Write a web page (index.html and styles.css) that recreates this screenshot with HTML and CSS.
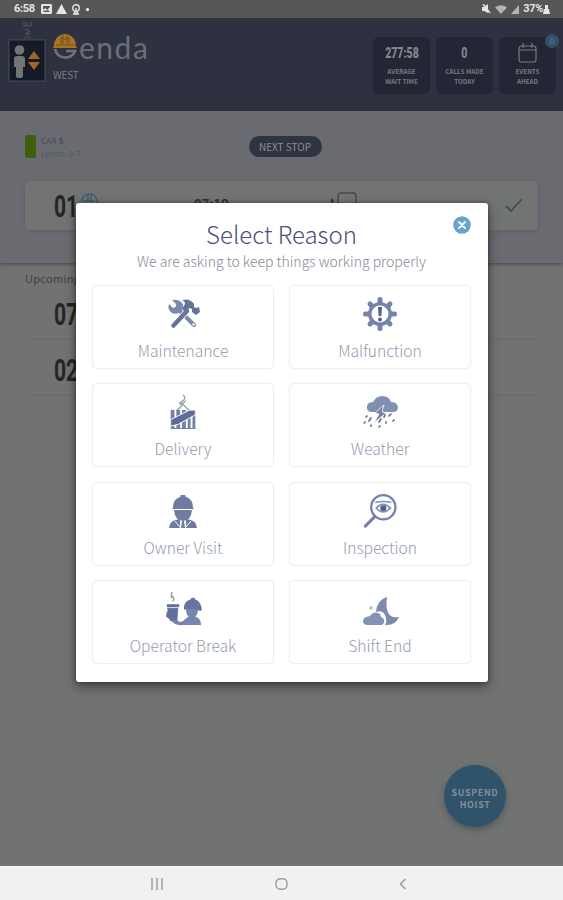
FILE: index.html
```
<!doctype html>
<html lang="en">
    <head>
        <meta charset="UTF-8" />
        <meta name="viewport" content="width=device-width, initial-scale=1.0" />
        <title>Genda | Select Reason</title>
        <link rel="stylesheet" href="styles.css">
    </head>
    <body>
        <div class="statusbar">
            <span class="clock">6:58</span>
            <svg width="11" height="10" viewBox="0 0 11 10"><path fill="currentColor" fill-rule="evenodd" d="M1 0h9l1 1v8l-1 1H1L0 9V1zM2 2v4l2-2 2 2 3-3V2zM2 8h7L7 6 5 7 4 6z"/></svg>
            <svg width="11" height="10" viewBox="0 0 11 10"><path fill="currentColor" d="M5.5 0 11 10H0z"/></svg>
            <svg width="10" height="11" viewBox="0 0 10 11" fill="none" stroke="currentColor" stroke-width="1.4"><circle cx="5" cy="4" r="3.3"/><path d="M5 4v3M2 10h6M3 8l2 1.5L7 8"/></svg>
            <span class="dot"></span>
            <div class="status-right">
                <svg width="9" height="10" viewBox="0 0 9 10"><path fill="currentColor" d="M0 3h2l4-3v9L2 7H0z"/><path stroke="currentColor" stroke-width="1.5" d="m1 0 7 9"/></svg>
                <svg class="faint" width="12" height="9" viewBox="0 0 12 9"><path fill="currentColor" d="M0 2.5Q6-2 12 2.5L6 9z"/></svg>
                <svg class="faint" width="8" height="9" viewBox="0 0 8 9"><path fill="currentColor" d="M8 0v9H0z"/></svg>
                <span class="battery">37%</span>
                <svg width="7" height="9" viewBox="0 0 7 9"><path fill="currentColor" d="M2 0h3v4h1l1 5H0l1-5h1z"/></svg>
            </div>
        </div>

        <header class="header">
            <div class="hoist">
                <svg class="hoist-top" width="9" height="19" viewBox="0 0 9 19" fill="none" stroke="currentColor"><path d="M1 1v5h7V1M4 2v4M2 9l5 2-5 3h6M1 19l3-3 4 3"/></svg>
                <svg class="hoist-icon" width="38" height="43" viewBox="0 0 38 43">
                    <rect x=".8" y=".8" width="36.4" height="41.4" fill="#151a28" stroke="#3c414e" stroke-width="1.6"/>
                    <circle cx="11.5" cy="11" r="4.8" fill="#747475"/>
                    <path fill="#747475" d="M9 17h5q3 0 3 3v8h-2v9q0 2-3.500 2T8 37v-9H6v-8q0-3 3-3z"/>
                    <path fill="#a2671e" d="m26 12 6 8H20zM20 23h12l-6 8z"/>
                </svg>
            </div>
            <div class="brand">
                <div class="logo">
                    <svg width="25" height="26" viewBox="0 0 25 26">
                        <path fill="#ad751b" d="M1 13C1 6 6 1 12 1s11 5 11 12l1 2H0z"/>
                        <path fill="none" stroke="#625139" d="M8 4v7M10 2v9M14 2v9M16 4v7M10 6h4M3 12h20"/>
                        <path fill="none" stroke="#6f737b" stroke-width="2.700" d="M2 16c2 11 17 11 20 2h-9"/>
                    </svg>
                    <span class="logo-text">enda</span>
                </div>
                <div class="site">WEST</div>
            </div>
            <div class="stats">
                <div class="stat">
                    <span class="stat-value">277:58</span>
                    <span class="stat-label">AVERAGE<br>WAIT TIME</span>
                </div>
                <div class="stat">
                    <span class="stat-value">0</span>
                    <span class="stat-label">CALLS MADE<br>TODAY</span>
                </div>
                <div class="stat">
                    <svg width="19" height="20" viewBox="0 0 19 20" fill="none" stroke="currentColor" stroke-width="1.200"><rect x="1" y="3" width="17" height="16" rx="2.500"/><path d="M1 7h17M5 0v5M14 0v5"/></svg>
                    <span class="stat-label">EVENTS<br>AHEAD</span>
                    <span class="badge">0</span>
                </div>
            </div>
        </header>

        <section class="current">
            <div class="car">
                <span class="car-color"></span>
                <div>
                    <div class="car-name">CAR <b>5</b></div>
                    <div class="car-levels">Levels: 0-7</div>
                </div>
            </div>
            <div class="next-stop">NEXT STOP</div>
            <div class="stop">
                <span class="level">01</span>
                <svg class="helmet" width="17" height="14" viewBox="0 0 17 14" fill="none" stroke="#3d5b70" stroke-width="1.300"><path d="M1 9c0-5 3-8 8-8 4 0 7 3 7 8v4M3 8h11M7 1v6M10 1v6"/></svg>
                <span class="stop-time">07:19</span>
                <svg class="load" width="28" height="18" viewBox="0 0 28 18" fill="none" stroke="#46484a" stroke-width="1.400"><path d="M8 17V4q0-3 3-3h12q3 0 3 3v13"/><path fill="#333" stroke="none" d="m1 6 3 3-3 3z"/></svg>
                <svg class="check" width="18" height="15" viewBox="0 0 18 15" fill="none" stroke="#35505f" stroke-width="1.800"><path d="m1 8 5 5L17 1"/></svg>
            </div>
        </section>

        <main class="upcoming">
            <div class="upcoming-title">Upcoming</div>
            <div class="upcoming-stop"><span class="level">07</span></div>
            <div class="upcoming-stop"><span class="level">02</span></div>
            <button class="suspend"><span>SUSPEND</span><span>HOIST</span></button>
        </main>

        <nav class="navbar">
            <svg width="12" height="12" viewBox="0 0 12 12" stroke="#9b9b9b" stroke-width="1.400"><path d="M1 0v12M6 0v12M11 0v12"/></svg>
            <svg width="13" height="12" viewBox="0 0 13 12" fill="none" stroke="#9b9b9b" stroke-width="1.400"><rect x="1" y=".7" width="11" height="10.600" rx="4.200"/></svg>
            <svg width="8" height="12" viewBox="0 0 8 12" fill="none" stroke="#9b9b9b" stroke-width="1.500"><path d="M6.500 1 1.500 6l5 5"/></svg>
        </nav>

        <section class="modal">
            <button class="close">
                <svg width="18" height="18" viewBox="0 0 18 18"><circle cx="9" cy="9" r="8.800" fill="#65a5cb"/><path stroke="#fff" stroke-width="1.900" stroke-linecap="round" d="m6 6 6 6m0-6-6 6"/></svg>
            </button>
            <h1>Select Reason</h1>
            <p>We are asking to keep things working properly</p>
            <div class="reasons">
                <button class="reason">
                    <svg width="36" height="36" viewBox="0 0 36 36">
                        <path fill="none" stroke="#7d89a9" stroke-width="4" stroke-linecap="round" d="m12 12 17 17"/>
                        <path fill="#7d89a9" d="m7 4 4 4v3l-3 1-4-4q-2 6 3 9 5 2 8-1l3-4q1-4-3-7-4-2-8-1z"/>
                        <circle cx="28.500" cy="28.500" r="1.200" fill="#fff"/>
                        <path stroke="#fff" stroke-width="6" d="M10 28 23 14"/>
                        <path stroke="#66749b" stroke-width="4.500" stroke-linecap="round" d="M8.500 29.500 22 15"/>
                        <path fill="#66749b" d="M17 4q8-2 12 4v3l2 1 3-1 1 5-4 3-4-3v-3l-3-1-3 5-4-4 3-5q0-3-3-4z"/>
                    </svg>
                    Maintenance
                </button>
                <button class="reason">
                    <svg width="36" height="36" viewBox="0 0 36 36">
                        <g stroke="#7583a8" stroke-width="5" stroke-linecap="round"><path d="M18 3.500v29M3.500 18h29M8 8l20 20M28 8 8 28"/></g>
                        <circle cx="18" cy="18" r="12" fill="#7583a8"/>
                        <circle cx="18" cy="18" r="8.500" fill="#fff"/>
                        <path fill="#50608c" d="M16 11h4l-.7 9h-2.600z"/><circle cx="18" cy="23.500" r="2" fill="#50608c"/>
                    </svg>
                    Malfunction
                </button>
                <button class="reason">
                    <svg width="38" height="38" viewBox="0 0 36 38">
                        <path fill="none" stroke="#9098a8" stroke-width="1.300" d="M18 1q4 3 0 6-3 2-3 4M14 9l2 2 3-2 2-2M18 11l-7 7M18 11l7 7"/>
                        <path fill="#7180a5" d="M5 17h4v20H5zM11 17h4v20h-4zM17 17h4v20h-4zM23 17h3v20h-3zM28 17h3v20h-3zM5 36h26v1H5z"/>
                        <path fill="#5e6c96" stroke="#fff" d="m5 27 20-10h6v5L13 32l-8 2z"/>
                    </svg>
                    Delivery
                </button>
                <button class="reason">
                    <svg width="38" height="36" viewBox="0 0 38 36">
                        <path fill="#8190b2" d="M10 18q-5-1-4-6 1-4 6-4 3-6 9-6 7 0 9 6 6 0 7 5 0 5-5 5z"/>
                        <path fill="#73809e" stroke="#fff" stroke-width=".8" d="m23 11-9 8 4 1-5 9 12-10-4-1z"/>
                        <g fill="none" stroke="#66718e" stroke-width="1.700" stroke-linecap="round"><path d="m6 22-1 1M10 24l-2 3M4 28l-1 1M20 25l-2 3M24 21l-1 2M30 20l-2 2M25 28v1M33 26l-1 1M19 32l-1 1M10 31v1"/></g>
                    </svg>
                    Weather
                </button>
                <button class="reason">
                    <svg width="36" height="36" viewBox="0 0 36 36" fill="#6f7ba1">
                        <path d="M8 15q0-9 7-11l1-2h4l1 2q7 2 7 11l1 1H7zM9 17h18q-1 11-9 11T9 17z"/>
                        <path d="M4 35q0-8 11-9v9zM21 26q11 1 11 9H21zM17 28h2l1 7h-4z"/>
                        <path stroke="#fff" d="M8 16.500h20M10 28l5 6M26 28l-5 6"/>
                    </svg>
                    Owner Visit
                </button>
                <button class="reason">
                    <svg width="36" height="38" viewBox="0 0 36 38" fill="none" stroke="#7380ad">
                        <circle cx="21.500" cy="15" r="12.800" stroke-width="2.400"/>
                        <path stroke-width="3.200" stroke-linecap="round" d="m12.500 25-10 10"/>
                        <path stroke="#8491b5" stroke-width="1.700" d="M13 10q8-2 17 0M14 16q7-8 15 0-8 8-15 0z"/>
                        <circle cx="21.500" cy="16" r="3.200" fill="#526283" stroke="none"/>
                    </svg>
                    Inspection
                </button>
                <button class="reason">
                    <svg width="40" height="38" viewBox="0 0 40 38" fill="#7885ac">
                        <path fill="none" stroke="#8c929a" stroke-width="1.300" d="M9 1q-3 2 0 5 3 2 0 5M7 6l2 1"/>
                        <path fill="#606f9e" d="M3 14h13v3h-1l-1 15H7L5 29l-3-2 1-5 1-1-1-4z"/>
                        <path d="M23 19h13q0 5-3 8 6 2 6 9H19q-7 1-12-5h7q4 4 9-2l3-2q-3-3-3-8z"/>
                        <path fill="#6875a0" d="M21 20q-1-9 7-11l1-2h3l1 2q6 2 7 11l-2 1-4-2H23z"/>
                        <path stroke="#fff" stroke-width=".8" d="M3 17.500h12"/>
                    </svg>
                    Operator Break
                </button>
                <button class="reason">
                    <svg width="38" height="36" viewBox="0 0 38 36" fill="#7f89ac">
                        <path d="M26 6q-10 3-11 15 8-3 10 6 1 4-1 7 10 1 14-8-15 3-12-20z"/>
                        <path fill="#8493b2" d="M7 34q-5 0-5-4t7-5q3-5 8-3 3 1 3 4 4 1 3 6l-2 2z"/>
                        <path stroke="#a0a9ba" d="M10 15v4M8 17h4"/>
                    </svg>
                    Shift End
                </button>
            </div>
        </section>
    </body>
</html>
```
FILE: styles.css
```
* {
    box-sizing: border-box;
}
body,
html {
    margin: 0;
    height: 100%;
}
body {
    display: flex;
    flex-direction: column;
    position: relative;
    overflow: hidden;
    background: #717272;
    font-family: "Noto Sans CJK SC", "Noto Sans", sans-serif;
}
button {
    font-family: inherit;
    border: none;
    padding: 0;
}
svg {
    display: block;
    flex: none;
}

.statusbar {
    height: 18px;
    background: #555655;
    color: #e5e5e5;
    display: flex;
    align-items: center;
    gap: 4px;
    padding: 0 13px 0 14px;
    font: bold 11px/18px "Roboto", sans-serif;
}
.clock {
    width: 23px;
    letter-spacing: -0.3px;
}
.dot {
    width: 3px;
    height: 3px;
    margin-left: 1px;
    border-radius: 50%;
    background: #fff;
}
.status-right {
    margin-left: auto;
    display: flex;
    align-items: center;
    gap: 4px;
}
.battery {
    margin-right: -4px;
    letter-spacing: -0.3px;
}
.faint {
    opacity: 0.65;
}

.header {
    height: 93px;
    background: #2e3240;
    color: #777a81;
    display: flex;
    align-items: flex-start;
    padding: 0 7px 0 8px;
}
.hoist {
    width: 45px;
}
.hoist-top {
    margin: 2px 0 0 15px;
    color: #545965;
}
.logo {
    display: flex;
    margin-top: 15px;
    height: 29px;
}
.logo-text {
    font: 30px/28px "Lato", sans-serif;
    letter-spacing: 1.5px;
    margin-left: 1px;
    color: #6b6e76;
}
.site {
    margin-top: 4px;
    font-size: 10px;
    line-height: 18px;
    letter-spacing: -0.2px;
}
.stats {
    margin: 19px 0 0 auto;
    display: flex;
    gap: 6px;
}
.stat {
    position: relative;
    width: 57px;
    height: 57px;
    border-radius: 6px;
    background: #232735;
    display: flex;
    flex-direction: column;
    align-items: center;
    padding-top: 6px;
}
.stat-value {
    font: 900 15px/20px "Roboto", sans-serif;
    transform: scaleX(0.7);
    color: #84868c;
}
.stat-label {
    margin-top: auto;
    padding-bottom: 7px;
    font-size: 6.3px;
    font-weight: 700;
    line-height: 10px;
    text-align: center;
    white-space: nowrap;
}
.badge {
    position: absolute;
    top: -3px;
    right: -3px;
    width: 14px;
    height: 14px;
    border-radius: 50%;
    background: #2e5268;
    font-size: 8px;
    line-height: 14px;
    text-align: center;
}

.current {
    height: 152px;
    padding: 24px 25px 0;
    background: #696b70;
    box-shadow: 0 1px 4px rgba(0, 0, 0, 0.4);
    display: grid;
    grid-template-columns: 1fr auto 1fr;
    grid-template-rows: 23px 49px;
    row-gap: 23px;
}
.car {
    display: flex;
    gap: 5px;
}
.car-color {
    width: 11px;
    height: 23px;
    border-radius: 2px;
    background: #3f5f0a;
}
.car-name {
    font-size: 8px;
    line-height: 12px;
    letter-spacing: 0.2px;
    color: #44495d;
}
.car-levels {
    font-size: 7.5px;
    line-height: 13px;
    letter-spacing: 0.3px;
    color: #4f5259;
}
.next-stop {
    width: 73px;
    height: 21px;
    margin: 1px 0 0 7px;
    border-radius: 11px;
    background: #2f3442;
    color: #8b8d91;
    font-size: 10px;
    line-height: 21px;
    text-align: center;
}
.stop {
    grid-column: 1 / -1;
    border-radius: 4px;
    background: #727373;
    box-shadow: 0 1px 4px rgba(0, 0, 0, 0.1);
    display: flex;
    padding: 0 15px 0 29px;
}
.level {
    display: block;
    width: 34px;
    font: bold 32px/50px "Roboto", sans-serif;
    transform: scaleX(0.66);
    transform-origin: left;
    color: #252525;
}
.helmet {
    margin: 12px 0 0 -7px;
}
.stop-time {
    margin-left: 96px;
    font-size: 13px;
    font-weight: 700;
    line-height: 46px;
    color: #303030;
}
.load {
    margin: 11px 0 0 101px;
}
.check {
    margin: 17px 0 0 auto;
}

.upcoming {
    flex: 1;
    position: relative;
    padding: 5px 25px;
}
.upcoming-title {
    height: 21px;
    font-size: 11px;
    line-height: 20px;
    letter-spacing: 0.3px;
    color: #3f4041;
}
.upcoming-stop {
    height: 49px;
    margin-bottom: 7px;
    padding-left: 29px;
    border-radius: 4px;
    box-shadow: 0 1px 3px rgba(0, 0, 0, 0.07);
}
.suspend {
    position: absolute;
    right: 57px;
    bottom: 39px;
    width: 62px;
    height: 62px;
    padding-top: 5px;
    border-radius: 50%;
    background: #2f536b;
    box-shadow: 0 3px 7px rgba(0, 0, 0, 0.25);
    color: #7f909b;
    display: flex;
    flex-direction: column;
    align-items: center;
    justify-content: center;
    font-size: 9px;
    font-weight: 700;
    line-height: 12px;
    letter-spacing: 0.6px;
}
.suspend span {
    height: 12px;
    overflow: hidden;
}

.navbar {
    height: 34px;
    background: #f1f1f1;
    border-top: 1px solid #fafafa;
    display: flex;
    align-items: center;
    justify-content: space-between;
    padding: 1px 156px 0 151px;
}

.modal {
    position: absolute;
    left: 76px;
    top: 203px;
    width: 412px;
    height: 479px;
    padding: 15px 17px 0 16px;
    border-radius: 3px;
    background: #fff;
    box-shadow: 0 5px 12px rgba(0, 0, 0, 0.4), 0 0 4px rgba(0, 0, 0, 0.4);
    text-align: center;
}
.close {
    position: absolute;
    top: 13px;
    right: 17px;
    background: none;
}
.modal h1 {
    margin: 0;
    font-size: 24px;
    font-weight: 300;
    line-height: 31px;
    color: #4b4e79;
}
.modal p {
    margin: 0;
    height: 36px;
    font-size: 14px;
    font-weight: 300;
    line-height: 24px;
    color: #858a98;
}
.reasons {
    display: grid;
    grid-template-columns: 1fr 1fr;
    gap: 14.4px 15px;
}
.reason {
    height: 84px;
    padding-top: 10px;
    border: 1px solid #eceef0;
    border-radius: 5px;
    background: #fff;
    box-shadow: 0 0 2px rgba(0, 0, 0, 0.05);
    display: flex;
    flex-direction: column;
    align-items: center;
    font-size: 15.6px;
    font-weight: 300;
    line-height: 22px;
    color: #929bae;
}
.reason svg {
    height: 36px;
    margin-bottom: 7px;
}
```
